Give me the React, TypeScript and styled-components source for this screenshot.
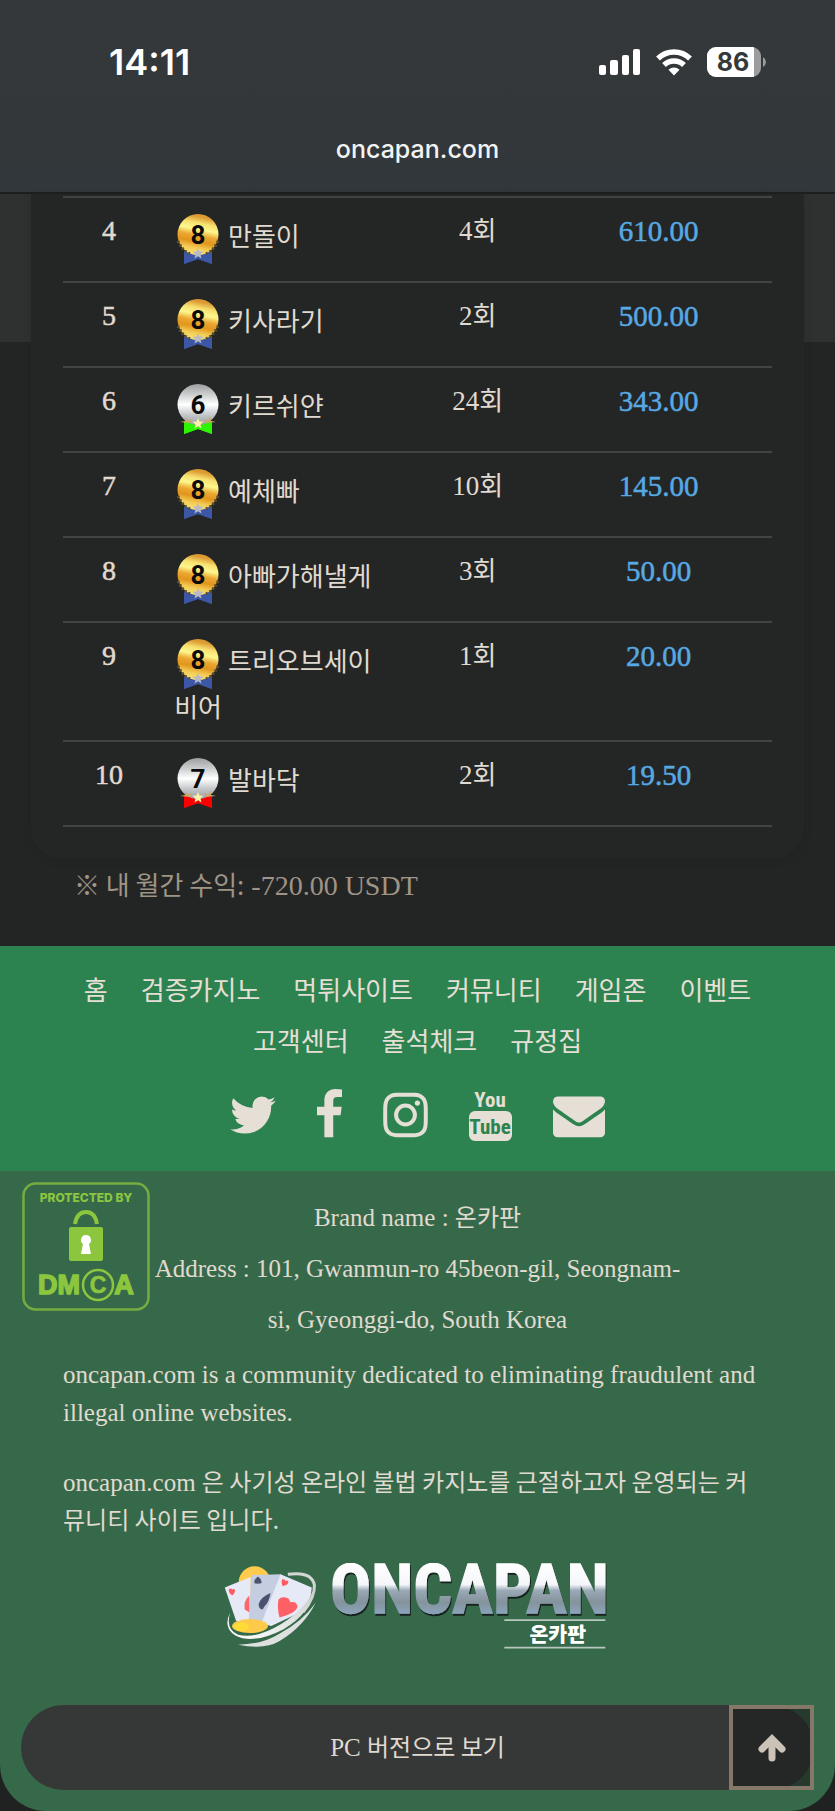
import React from "react";
import styled, { createGlobalStyle } from "styled-components";

const serif = `"Liberation Serif", "Noto Sans CJK KR", serif`;
const korean = `"Noto Sans CJK KR", sans-serif`;
const system = `Inter, "Liberation Sans", sans-serif`;
const condensed = `"Roboto Condensed", "Open Sans Condensed", Roboto, sans-serif`;

const GlobalStyle = createGlobalStyle`
  *, *::before, *::after { box-sizing: border-box; }
  body {
    margin: 0;
    background: #1f2221;
    color: #e0dad0;
    font-family: ${serif};
    font-size: 27px;
  }
`;

/* ---------- Browser chrome ---------- */

const Header = styled.header`
  display: flex;
  flex-direction: column;
  height: 194px;
  padding-top: 38px;
  background: linear-gradient(#34383a, #32373b);
  border-bottom: 2px solid #1c1e1f;
  color: #fff;
  font-family: ${system};
`;

const StatusBar = styled.div`
  display: flex;
  justify-content: space-between;
  align-items: center;
  height: 48px;
  padding: 0 69px 0 109px;
`;

const Clock = styled.time`
  font-size: 36px;
  font-weight: 600;
  line-height: 48px;
`;

const StatusIcons = styled.div`
  display: flex;
  align-items: center;
  gap: 15px;
`;

const Address = styled.div`
  margin-top: 37px;
  color: #f3f3f3;
  font-size: 25px;
  font-weight: 500;
  line-height: 52px;
  text-align: center;
`;

/* ---------- Ranking ---------- */

const Main = styled.main`
  padding: 0 31px 43px;
  background: linear-gradient(#2f3130 0 148px, #232524 148px);
`;

const Card = styled.section`
  padding: 2px 32px 32px;
  background: #242625;
  border-radius: 0 0 32px 32px;
  box-shadow: 0 2px 10px rgba(20, 22, 21, 0.1);
`;

const Ranking = styled.table`
  width: 100%;
  table-layout: fixed;
  border-collapse: separate;
  border-spacing: 0;
  border-top: 2px solid #424443;
`;

const Cell = styled.td<{ $width: number }>`
  width: ${(p) => p.$width}%;
  padding: 16px 0 17px;
  border-bottom: 2px solid #424443;
  line-height: 34px;
  text-align: center;
  vertical-align: top;
`;

const RankCell = styled(Cell)`
  font-size: 28px;
  -webkit-text-stroke: 0.5px;
`;

const NameCell = styled(Cell)`
  padding-left: 19px;
  padding-right: 19px;
  font-family: ${korean};
  font-size: 26px;
  text-align: left;
  word-break: break-all;
`;

const AmountCell = styled(Cell)`
  color: #57a9e3;
  font-size: 29px;
  -webkit-text-stroke: 0.5px;
`;

const Ko = styled.span`
  font-family: ${korean};
  font-size: 26px;
  line-height: 1;
`;

const MedalSvg = styled.svg`
  display: inline-block;
  width: 46px;
  height: 50px;
  margin-right: 2px;
  vertical-align: middle;
`;

const Note = styled.p`
  margin: 10px 43px 0;
  color: #9f9486;
  font-size: 28px;
  line-height: 34px;
`;

/* ---------- Footer ---------- */

const Footer = styled.footer`
  position: relative;
  padding-bottom: 21px;
  background: #36694a;
  border-radius: 0 0 46px 46px;
`;

const FooterNav = styled.nav`
  display: flex;
  flex-direction: column;
  align-items: center;
  gap: 24px;
  padding: 17px 63px 30px;
  background: #2d834f;
`;

const Links = styled.div`
  display: flex;
  flex-wrap: wrap;
  justify-content: center;
  column-gap: 33px;
`;

const NavLink = styled.a`
  color: #e5dfd6;
  font-family: ${korean};
  font-size: 26px;
  line-height: 51px;
  text-decoration: none;
`;

const Social = styled.div`
  display: flex;
  gap: 41px;
`;

const SocialLink = styled.a`
  display: block;
  height: 52px;
  color: #e5dfd6;
  svg { display: block; height: 52px; fill: currentColor; }
`;

const Info = styled.div`
  position: relative;
  padding: 21px 63px 0;
  font-size: 25px;
  ${Ko} { font-size: 24px; }
`;

const DmcaBadge = styled.a`
  position: absolute;
  top: 11px;
  left: 22px;
  svg { display: block; }
`;

const Contact = styled.address`
  max-width: 540px;
  margin: 0 auto 11px;
  font-style: normal;
  line-height: 51px;
  text-align: center;
`;

const Paragraph = styled.p`
  max-width: 700px;
  margin: 0 0 32px;
  line-height: 38px;
`;

const LogoLink = styled.a`
  display: block;
  width: 388px;
  margin: -9px auto 55px;
  svg { display: block; }
`;

const BottomBar = styled.div`
  position: relative;
  margin: 0 21px;
`;

const PcButton = styled.button`
  width: 100%;
  height: 85px;
  border: 0;
  border-radius: 43px;
  background: #363837;
  color: #e0dad0;
  font-family: ${serif};
  font-size: 25px;
  ${Ko} { font-size: 24px; }
`;

const TopButton = styled.button`
  position: absolute;
  top: 0;
  right: 0;
  display: grid;
  place-items: center;
  width: 85px;
  height: 85px;
  padding: 0;
  border: 4px solid #857869;
  background: rgba(26, 26, 26, 0.6);
  color: #cbc3b7;
`;

/* ---------- Drawings ---------- */

type Grade = 6 | 7 | 8;

function Medal({ grade }: { grade: Grade }) {
  const ribbon = { 6: "#2bf500", 7: "#fa0000", 8: "#3c57a6" }[grade];
  const gold = grade === 8;
  return (
    <MedalSvg viewBox="0 0 46 50" role="img" aria-label={`Level ${grade}`}>
      <path d="M10 37h28v13l-14-5-14 5z" fill={ribbon} />
      <circle cx="24" cy="20.5" r="20.5" fill={gold ? "url(#gold)" : "url(#silver)"} />
      <path
        d="M4 27q5 11 13 13M44 27q-5 11-13 13"
        fill="none"
        stroke={gold ? "#5c502a" : "none"}
        strokeWidth="3"
        strokeDasharray="2 2"
      />
      <path d="M10 39q7 3 14 2 7 1 14-2v11l-14-5-14 5z" fill={ribbon} />
      {!gold && <path d="M6 38l5-1 0-4 3 4 4-2-2 4zM42 38l-5-1 0-4-3 4-4-2 2 4z" fill="#c9a765" />}
      <path
        d="M24 34l1.500 3.500 4 .3-3 2.600 1 4-3.500-2.200-3.500 2.200 1-4-3-2.600 4-.3z"
        fill={gold ? "#b9bac6" : "#fbf0a8"}
      />
      <text x="24" y="30" textAnchor="middle" fontFamily="Roboto, sans-serif" fontSize="26" fontWeight="700" fill="#0b0b0b">
        {grade}
      </text>
    </MedalSvg>
  );
}

function MedalPaints() {
  return (
    <svg width="0" height="0" style={{ display: "block" }} aria-hidden="true">
      <defs>
        <linearGradient id="gold" x1="0.2" y1="0" x2="0" y2="1">
          <stop offset="0" stopColor="#dc9a30" />
          <stop offset="0.15" stopColor="#f7e070" />
          <stop offset="0.3" stopColor="#fdf78c" />
          <stop offset="0.45" stopColor="#eba832" />
          <stop offset="0.6" stopColor="#e2951c" />
          <stop offset="0.75" stopColor="#f3cc55" />
          <stop offset="1" stopColor="#fff186" />
        </linearGradient>
        <linearGradient id="silver" x1="0" y1="0" x2="0" y2="1">
          <stop offset="0" stopColor="#9d9ea0" />
          <stop offset="0.3" stopColor="#d5d6d8" />
          <stop offset="0.5" stopColor="#ffffff" />
          <stop offset="0.75" stopColor="#c5c8cb" />
          <stop offset="1" stopColor="#999da0" />
        </linearGradient>
      </defs>
    </svg>
  );
}

const SignalIcon = () => (
  <svg width="42" height="26" viewBox="0 0 42 26" fill="#fff" aria-label="Signal">
    <rect x="0" y="16" width="7" height="10" rx="2" />
    <rect x="11" y="11" width="8" height="15" rx="2" />
    <rect x="23" y="6" width="7" height="20" rx="2" />
    <rect x="34" y="0" width="7" height="26" rx="2" />
  </svg>
);

const WifiIcon = () => (
  <svg width="36" height="27" viewBox="0 0 36 27" fill="none" stroke="#fff" strokeWidth="5.500" aria-label="Wi-Fi">
    <path d="M2 9.500a23 23 0 0 1 32 0" />
    <path d="M8 16a14.500 14.500 0 0 1 20 0" />
    <path d="M12.500 20.800a8 8 0 0 1 11 0L18 26.500z" fill="#fff" stroke="none" />
  </svg>
);

const BatteryIcon = () => (
  <svg width="59" height="30" viewBox="0 0 59 30" aria-label="Battery">
    <defs>
      <clipPath id="charge"><rect width="47" height="30" /></clipPath>
    </defs>
    <rect width="54" height="30" rx="9" fill="#9a9c9e" />
    <rect width="54" height="30" rx="9" fill="#fff" clipPath="url(#charge)" />
    <path d="M56 10q3 2 3 5t-3 5z" fill="#9a9c9e" />
    <text x="26" y="24" textAnchor="middle" fontFamily="Inter, sans-serif" fontSize="25" fontWeight="700" fill="#34383a">86</text>
  </svg>
);

const TwitterIcon = () => (
  <svg width="46" viewBox="108 0 1576 1792">
    <path d="M1684 408q-67 98-162 167 1 14 1 42 0 130-38 259.500t-115.500 248.500-184.500 210.500-258 146-323 54.500q-271 0-496-145 35 4 78 4 225 0 401-138-105-2-188-64.500t-114-159.500q33 5 61 5 43 0 85-11-112-23-185.500-111.500t-73.500-205.500v-4q68 38 146 41-66-44-105-115t-39-154q0-88 44-163 121 149 294.500 238.500t371.500 99.500q-8-38-8-74 0-134 94.500-228.500t228.500-94.500q140 0 236 102 109-21 205-78-37 115-142 178 93-10 186-50z" />
  </svg>
);

const FacebookIcon = () => (
  <svg width="25" viewBox="479 0 864 1792">
    <path d="M1343 12v264h-157q-86 0-116 36t-30 108v189h293l-39 296h-254v759h-306v-759h-255v-296h255v-218q0-186 104-288.500t277-102.500q147 0 228 12z" />
  </svg>
);

const InstagramIcon = () => (
  <svg width="45" viewBox="128 0 1536 1792">
    <path d="M1152 896q0-106-75-181t-181-75-181 75-75 181 75 181 181 75 181-75 75-181zm138 0q0 164-115 279t-279 115-279-115-115-279 115-279 279-115 279 115 115 279zm108-410q0 38-27 65t-65 27-65-27-27-65 27-65 65-27 65 27 27 65zm-502-220q-7 0-76.500-.5t-105.500 0-96.500 3-103 10-71.500 18.500q-50 20-88 58t-58 88q-11 29-18.500 71.500t-10 103-3 96.500 0 105.500.5 76.500-.5 76.500 0 105.500 3 96.500 10 103 18.500 71.500q20 50 58 88t88 58q29 11 71.500 18.500t103 10 96.500 3 105.500 0 76.500-.5 76.500.5 105.500 0 96.500-3 103-10 71.500-18.500q50-20 88-58t58-88q11-29 18.500-71.500t10-103 3-96.500 0-105.500-.5-76.500.5-76.500 0-105.500-3-96.500-10-103-18.500-71.500q-20-50-58-88t-88-58q-29-11-71.500-18.500t-103-10-96.500-3-105.500 0-76.500.5zm768 630q0 229-5 317-10 208-124 322t-322 124q-88 5-317 5t-317-5q-208-10-322-124t-124-322q-5-88-5-317t5-317q10-208 124-322t322-124q88-5 317-5t317 5q208 10 322 124t124 322q5 88 5 317z" />
  </svg>
);

const YouTubeIcon = () => (
  <svg width="43" viewBox="0 0 43 52" fontFamily={condensed} fontWeight="700" textAnchor="middle">
    <text x="21" y="18" fontSize="21">You</text>
    <rect y="22" width="43" height="30" rx="6" />
    <text x="21" y="45" fontSize="21" style={{ fill: "#2d834f" }}>Tube</text>
  </svg>
);

const EnvelopeIcon = () => (
  <svg width="52" viewBox="0 0 1792 1792">
    <path d="M1792 710v794q0 66-47 113t-113 47h-1472q-66 0-113-47t-47-113v-794q44 49 101 87 362 246 497 345 57 42 92.500 65.500t94.500 48 110 24.500h2q51 0 110-24.500t94.500-48 92.500-65.500q170-123 498-345 57-39 100-87zm0-294q0 79-49 151t-122 123q-376 261-468 325-10 7-42.500 31t-54 38.500-52 32.500-57.500 27-50 9h-2q-23 0-50-9t-57.500-27-52-32.500-54-38.500-42.500-31q-91-64-262-182.500t-205-142.500q-62-42-117-115.500t-55-136.500q0-78 41.500-130t118.500-52h1472q65 0 112.500 47t47.500 113z" />
  </svg>
);

const DmcaIcon = () => (
  <svg width="128" height="129" viewBox="0 0 128 129" fontFamily="'Liberation Sans', sans-serif" fontWeight="700" fill="#8cc63f" textAnchor="middle">
    <rect x="1.500" y="1.500" width="125" height="126" rx="12" fill="none" stroke="#75ad40" strokeWidth="2.500" />
    <text x="64" y="20" fontFamily="Inter, sans-serif" fontSize="12" fontWeight="800">PROTECTED BY</text>
    <path d="M53 42q2-12 11-12t11 12" fill="none" stroke="#8cc63f" strokeWidth="4" />
    <rect x="47" y="45" width="34" height="34" rx="2" />
    <path d="M64 53a5 5 0 0 1 3 9l2 10h-10l2-10a5 5 0 0 1 3-9z" fill="#fff" />
    <text x="37" y="112" fontSize="27" stroke="#8cc63f" strokeWidth="1.500">DM</text>
    <circle cx="76" cy="103" r="15" fill="none" stroke="#8cc63f" strokeWidth="2.500" />
    <text x="76" y="111" fontSize="23" stroke="#8cc63f" strokeWidth=".6">C</text>
    <text x="102" y="112" fontSize="27" stroke="#8cc63f" strokeWidth="1.500">A</text>
  </svg>
);

const LogoIcon = () => (
  <svg width="388" height="87" viewBox="72 70 1164 262">
    <defs>
      <linearGradient id="steel" gradientUnits="userSpaceOnUse" x1="0" y1="75" x2="0" y2="225">
        <stop offset="0" stopColor="#ffffff" />
        <stop offset="0.4" stopColor="#f4f6fa" />
        <stop offset="0.52" stopColor="#9aa9b6" />
        <stop offset="0.75" stopColor="#84939c" />
        <stop offset="1" stopColor="#8ba5bd" />
      </linearGradient>
      <linearGradient id="ring" x1="0" y1="1" x2="1" y2="0">
        <stop offset="0" stopColor="#ffffff" />
        <stop offset="1" stopColor="#c9cccb" />
      </linearGradient>
      <filter id="lift" x="-0.05" y="-0.1" width="1.1" height="1.3">
        <feDropShadow dx="3" dy="6" stdDeviation="2" floodColor="#16201c" />
      </filter>
    </defs>
    <circle cx="162" cy="128" r="48" fill="#ffcb4d" />
    <path d="M262 104q72-10 80 32 2 38-34 82" fill="none" stroke="#d4d6d5" strokeWidth="9" />
    <path d="M72 144l78-32v150l-44-18z" fill="#e6e9f6" />
    <path d="M152 106l90-2-20 60-34 92-44-6z" fill="#c5cde0" />
    <path d="M240 104l94 40q2 40-42 78l-80 38-30-8z" fill="#e6e9f6" />
    <path d="M84 150q8-6 10 0 8-4 9 3 0 8-8 15-11-6-11-18z" fill="#ff5a60" />
    <path d="M146 168v50l-14-8q-4-26 14-42z" fill="#ff6468" />
    <path d="M172 111q14 10 10 20-12 3-20 0-4-10 10-20zM210 160q-4 26-18 40l-6 10q-12-2-12-16 6-22 36-34z" fill="#4a5270" />
    <path d="M246 118q8 0 8 6 6-4 10 3-2 10-18 12-5-14 0-21z" fill="#ff5a60" />
    <path d="M234 180q10-12 30-3l6 11q18-4 21 12-2 20-54 34-8-30-3-54z" fill="#ff6065" />
    <ellipse cx="148" cy="260" rx="54" ry="21" fill="#ffc94a" />
    <ellipse cx="122" cy="262" rx="24" ry="13" fill="#ffdb38" />
    <path d="M88 220q-14 50 24 66 54 14 130-32 74-46 102-110-12 78-96 126-90 46-144 18-38-24-16-68z" fill="url(#ring)" />
    <path d="M346 190q-36 72-110 116-44 26-124 10 70 0 126-34 66-34 108-92z" fill="#dfe0e0" />
    <text x="389" y="222" fontFamily={condensed} fontSize="206" fontWeight="700" fill="url(#steel)" stroke="url(#steel)" strokeWidth="4" filter="url(#lift)">
      ONCAPAN
    </text>
    <path d="M914 242h304M914 325h304" stroke="#b8c8be" strokeWidth="5" />
    <text x="1075" y="307" textAnchor="middle" fill="#fff" fontFamily="'Noto Sans CJK KR', sans-serif" fontSize="62" fontWeight="900">온카판</text>
  </svg>
);

const ArrowUpIcon = () => (
  <svg width="28" height="28" viewBox="0 0 28 28" fill="none" stroke="currentColor" strokeWidth="7" strokeLinecap="round" aria-hidden="true">
    <path d="M14 24V7" />
    <path d="M4 15L14 5l10 10" />
  </svg>
);

/* ---------- Content ---------- */

const players: { rank: number; grade: Grade; name: string; count: number; amount: string }[] = [
  { rank: 4, grade: 8, name: "만돌이", count: 4, amount: "610.00" },
  { rank: 5, grade: 8, name: "키사라기", count: 2, amount: "500.00" },
  { rank: 6, grade: 6, name: "키르쉬얀", count: 24, amount: "343.00" },
  { rank: 7, grade: 8, name: "예체빠", count: 10, amount: "145.00" },
  { rank: 8, grade: 8, name: "아빠가해낼게", count: 3, amount: "50.00" },
  { rank: 9, grade: 8, name: "트리오브세이비어", count: 1, amount: "20.00" },
  { rank: 10, grade: 7, name: "발바닥", count: 2, amount: "19.50" },
];

const links = ["홈", "검증카지노", "먹튀사이트", "커뮤니티", "게임존", "이벤트", "고객센터", "출석체크", "규정집"];

const socials = [
  { label: "Twitter", Icon: TwitterIcon },
  { label: "Facebook", Icon: FacebookIcon },
  { label: "Instagram", Icon: InstagramIcon },
  { label: "YouTube", Icon: YouTubeIcon },
  { label: "Email", Icon: EnvelopeIcon },
];

export default function App() {
  return (
    <>
      <GlobalStyle />
      <Header>
        <StatusBar>
          <Clock>14:11</Clock>
          <StatusIcons>
            <SignalIcon />
            <WifiIcon />
            <BatteryIcon />
          </StatusIcons>
        </StatusBar>
        <Address>oncapan.com</Address>
      </Header>

      <Main>
        <MedalPaints />
        <Card>
          <Ranking>
            <tbody>
              {players.map((p) => (
                <tr key={p.rank}>
                  <RankCell $width={13}>{p.rank}</RankCell>
                  <NameCell $width={36}>
                    <Medal grade={p.grade} /> {p.name}
                  </NameCell>
                  <Cell $width={19}>{p.count}<Ko>회</Ko></Cell>
                  <AmountCell $width={32}>{p.amount}</AmountCell>
                </tr>
              ))}
            </tbody>
          </Ranking>
        </Card>
        <Note><Ko>※ 내 월간 수익:</Ko> -720.00 USDT</Note>
      </Main>

      <Footer>
        <FooterNav>
          <Links>
            {links.map((l) => <NavLink key={l} href="#">{l}</NavLink>)}
          </Links>
          <Social>
            {socials.map(({ label, Icon }) => (
              <SocialLink key={label} href="#" aria-label={label}><Icon /></SocialLink>
            ))}
          </Social>
        </FooterNav>

        <Info>
          <DmcaBadge href="#" aria-label="DMCA"><DmcaIcon /></DmcaBadge>
          <Contact>
            <div>Brand name : <Ko>온카판</Ko></div>
            <div>Address : 101, Gwanmun-ro 45beon-gil, Seongnam-si, Gyeonggi-do, South Korea</div>
          </Contact>
          <Paragraph>
            oncapan.com is a community dedicated to eliminating fraudulent and illegal online websites.
          </Paragraph>
          <Paragraph>
            oncapan.com <Ko>은 사기성 온라인 불법 카지노를 근절하고자 운영되는 커뮤니티 사이트 입니다.</Ko>
          </Paragraph>
        </Info>
        <LogoLink href="#" aria-label="ONCAPAN"><LogoIcon /></LogoLink>

        <BottomBar>
          <PcButton type="button">PC <Ko>버전으로 보기</Ko></PcButton>
          <TopButton type="button" aria-label="Top"><ArrowUpIcon /></TopButton>
        </BottomBar>
      </Footer>
    </>
  );
}
